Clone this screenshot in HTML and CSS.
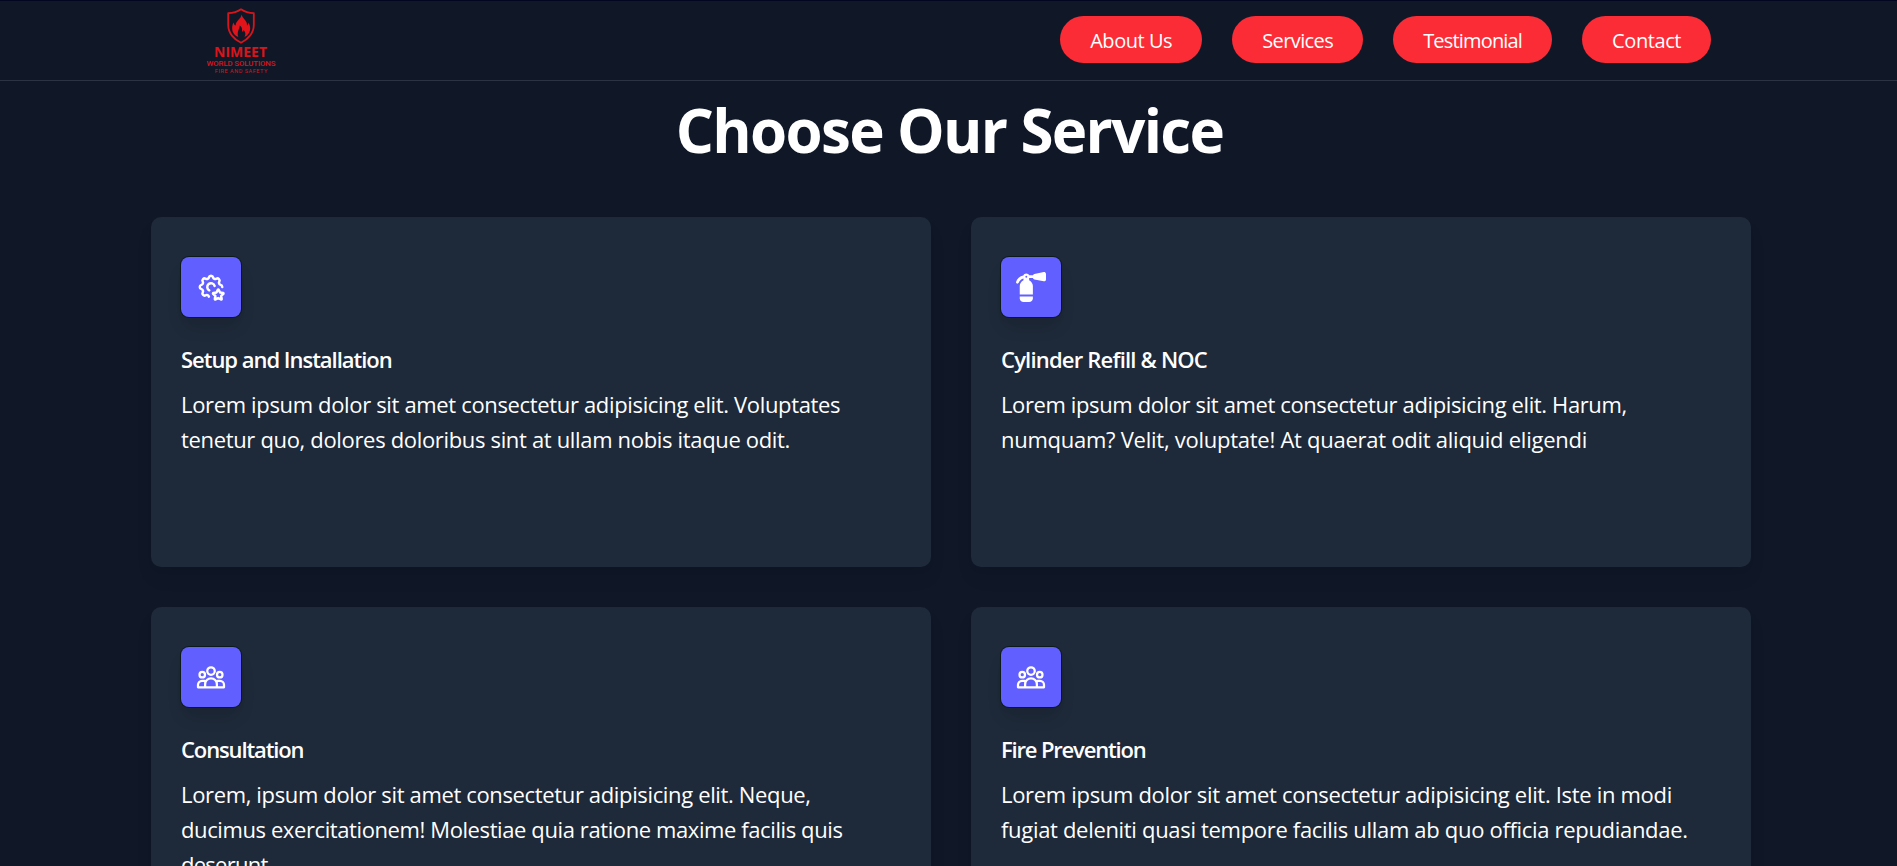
FILE: index.html
```html
<!DOCTYPE html>
<html lang="en">
<head>
<meta charset="utf-8">
<title>Nimeet World Solutions</title>
<link rel="stylesheet" href="styles.css">
</head>
<body>
<header class="header">
  <svg class="logo" viewBox="0 0 80 80" role="img" aria-label="Nimeet World Solutions">
    <g transform="translate(1 0)">
      <path class="logo-shield" d="M40 9.300C36 12 32 13 27.200 13.200V25C27.200 33 33 39.500 40 42.800C47 39.500 52.800 33 52.800 25V13.200C48 13 44 12 40 9.300Z"/>
      <path class="logo-flame" d="M40.500 14.500C41.500 18.500 46.500 20.500 46 25.500C47 25 47.300 23.800 47.300 22.500C50.500 27 50 34 43.500 37C45 34.500 44.500 31.500 42.500 30C42.300 31.500 41.500 31.800 41 31.500C41.500 28.500 40.500 26.500 38.700 25.500C39 29 35.500 31 37.300 37C31 34.500 29.800 28 32.500 22.500C33 24.500 33.800 25.300 34.700 25.500C34.500 20.500 40 19.500 40.500 14.500Z"/>
    </g>
    <text class="logo-name" x="14" y="57.200" textLength="53">NIMEET</text>
    <text class="logo-sub" x="6.500" y="65.800" textLength="69">WORLD SOLUTIONS</text>
    <text class="logo-tag" x="14.800" y="73" textLength="52.500">FIRE AND SAFETY</text>
  </svg>
  <nav class="nav">
    <a class="nav-link about">About Us</a>
    <a class="nav-link services">Services</a>
    <a class="nav-link testimonial">Testimonial</a>
    <a class="nav-link contact">Contact</a>
  </nav>
</header>
<main class="main">
  <h1 class="heading">Choose Our Service</h1>
  <section class="grid">
    <article class="card setup">
      <div class="icon-box">
        <svg class="icon line" viewBox="0 0 24 24"><path d="M10.325 19.683a1.723 1.723 0 0 0-2.573-1.066c-1.543.94-3.310-.826-2.370-2.370a1.724 1.724 0 0 0-1.065-2.572c-1.756-.426-1.756-2.924 0-3.350a1.724 1.724 0 0 0 1.066-2.573c-.94-1.543.826-3.310 2.370-2.370c1 .608 2.296.07 2.572-1.065c.426-1.756 2.924-1.756 3.350 0a1.724 1.724 0 0 0 2.573 1.066c1.543-.94 3.310.826 2.370 2.370a1.724 1.724 0 0 0 1.065 2.572c.860.209 1.298.914 1.314 1.635"/><path d="M14.882 11.165a3.001 3.001 0 1 0-4.310 3.474"/><path d="M17.800 20.817l-2.172 1.138a.392.392 0 0 1-.568-.41l.415-2.411l-1.757-1.707a.389.389 0 0 1 .217-.665l2.428-.352l1.086-2.193a.392.392 0 0 1 .702 0l1.086 2.193l2.428.352a.39.39 0 0 1 .217.665l-1.757 1.707l.414 2.410a.39.39 0 0 1-.567.411z"/></svg>
      </div>
      <h2 class="title">Setup and Installation</h2>
      <p class="text"><span class="row-a">Lorem ipsum dolor sit amet consectetur adipisicing elit. Voluptates</span> <span class="row-b">tenetur quo, dolores doloribus sint at ullam nobis itaque odit.</span></p>
    </article>
    <article class="card cylinder">
      <div class="icon-box">
        <svg class="icon solid" viewBox="0 0 512 512"><path fill-rule="evenodd" d="M500.300 7.300C507.700 13.300 512 22.400 512 32v96c0 9.600-4.300 18.700-11.700 24.700s-17.200 8.500-26.600 6.600l-160-32C301.500 124.900 292 115.700 289 104H224v34.800c37.800 18 64 56.500 64 101.200v144H64V240c0-44.700 26.200-83.200 64-101.200v-28.500C90 119 61 146 46 185.500c-5 12-19 17.500-31 12.500s-18-19-13-31C20 112 63 70 124 59c8-20 28-35 52-35 22 0 40 13 49 32h64c3-11.700 12.500-20.900 24.700-23.300l160-32c9.400-1.900 19.100.6 26.600 6.600zM176 96a16 16 0 1 0 0-32 16 16 0 0 0 0 32z"/><path d="M64 416h224v32c0 35.300-28.700 64-64 64h-96c-35.300 0-64-28.700-64-64z"/></svg>
      </div>
      <h2 class="title">Cylinder Refill &amp; NOC</h2>
      <p class="text"><span class="row-a">Lorem ipsum dolor sit amet consectetur adipisicing elit. Harum,</span> <span class="row-b">numquam? Velit, voluptate! At quaerat odit aliquid eligendi</span></p>
    </article>
    <article class="card consultation">
      <div class="icon-box">
        <svg class="icon line people" viewBox="0 0 24 24"><circle cx="12" cy="7.200" r="3"/><circle cx="5" cy="10.100" r="2.200"/><circle cx="19" cy="10.100" r="2.200"/><path d="M7.300 20.200v-2.500a4.700 4.700 0 0 1 9.400 0v2.500M6.800 15H4.800A3.200 3.200 0 0 0 1.600 18.200v2h20.800v-2A3.200 3.200 0 0 0 19.200 15h-2"/></svg>
      </div>
      <h2 class="title">Consultation</h2>
      <p class="text"><span class="row-a">Lorem, ipsum dolor sit amet consectetur adipisicing elit. Neque,</span> <span class="row-b">ducimus exercitationem! Molestiae quia ratione maxime facilis quis</span> <span class="row-c">deserunt.</span></p>
    </article>
    <article class="card prevention">
      <div class="icon-box">
        <svg class="icon line people" viewBox="0 0 24 24"><circle cx="12" cy="7.200" r="3"/><circle cx="5" cy="10.100" r="2.200"/><circle cx="19" cy="10.100" r="2.200"/><path d="M7.300 20.200v-2.500a4.700 4.700 0 0 1 9.400 0v2.500M6.800 15H4.800A3.200 3.200 0 0 0 1.600 18.200v2h20.800v-2A3.200 3.200 0 0 0 19.200 15h-2"/></svg>
      </div>
      <h2 class="title">Fire Prevention</h2>
      <p class="text"><span class="row-a">Lorem ipsum dolor sit amet consectetur adipisicing elit. Iste in modi</span> <span class="row-b">fugiat deleniti quasi tempore facilis ullam ab quo officia repudiandae.</span></p>
    </article>
  </section>
</main>
</body>
</html>
```
FILE: styles.css
```css
* { box-sizing: border-box; margin: 0; padding: 0; }
body {
  height: 866px;
  overflow: hidden;
  background: #101828;
  color: #fff;
  font-family: "Open Sans", "Noto Sans", sans-serif;
}
.header {
  display: flex;
  justify-content: space-between;
  align-items: flex-start;
  height: 81px;
  padding: 0 186px 0 200px;
  border-top: 1px solid #030620;
  border-bottom: 1px solid #2c3342;
}
.logo { width: 80px; height: 80px; margin-top: -1px; }
.logo-shield { fill: none; stroke: #d9151b; stroke-width: 1.800; stroke-linejoin: round; }
.logo-flame { fill: #e0141a; }
.logo text { fill: #d9151b; }
.logo .logo-name { font-family: "Open Sans", sans-serif; font-size: 14px; font-weight: 700; }
.logo .logo-sub { font-family: Roboto, sans-serif; font-size: 7.800px; font-weight: 500; }
.logo .logo-tag { font-family: Roboto, sans-serif; font-size: 5.500px; }
.nav { display: flex; gap: 30px; padding-top: 15px; }
.nav-link {
  height: 47px;
  padding: 0 30px;
  border-radius: 24px;
  background: #fb2c36;
  font-size: 20px;
  line-height: 50px;
}
.about { letter-spacing: -.450px; }
.services { letter-spacing: -.600px; }
.testimonial { letter-spacing: -.820px; }
.contact { letter-spacing: -.420px; }
.main { padding: 0 146px 0 151px; }
.heading {
  padding: 14px 3px 0 0;
  font-size: 60px;
  font-weight: 700;
  line-height: 70px;
  letter-spacing: -1.650px;
  text-align: center;
}
.grid {
  display: grid;
  grid-template-columns: 780px 780px;
  grid-auto-rows: 350px;
  gap: 40px;
  margin-top: 52px;
}
.card {
  padding: 40px 30px;
  border-radius: 10px;
  background: #1e2939;
  box-shadow: 0 12px 19px -4px rgba(0, 0, 0, .1), 0 5px 8px -5px rgba(0, 0, 0, .1);
}
.icon-box {
  display: flex;
  align-items: center;
  justify-content: center;
  width: 60px;
  height: 60px;
  border-radius: 8px;
  background: #615fff;
  box-shadow: 0 0 0 1px #0d1a1c, 0 12px 19px -4px rgba(0, 0, 0, .1), 0 5px 8px -5px rgba(0, 0, 0, .1);
}
.icon { width: 30px; height: 30px; }
.line { fill: none; stroke: #fff; stroke-width: 2; stroke-linecap: round; stroke-linejoin: round; }
.people { stroke-width: 1.800; }
.solid { fill: #fff; }
.title {
  margin-top: 25px;
  font-size: 22px;
  font-weight: 600;
  line-height: 35px;
}
.text {
  margin-top: 10px;
  font-size: 22px;
  line-height: 35px;
  white-space: nowrap;
}
.text span { display: block; }

/* Tracking per card */
.setup .title { letter-spacing: -1.020px; }
.setup .row-a { letter-spacing: -.344px; }
.setup .row-b { letter-spacing: -.335px; }
.cylinder .title { letter-spacing: -.800px; }
.cylinder .row-a { letter-spacing: -.380px; }
.cylinder .row-b { letter-spacing: -.260px; }
.consultation .title { letter-spacing: -1.120px; }
.consultation .row-a { letter-spacing: -.355px; }
.consultation .row-b { letter-spacing: -.400px; }
.consultation .row-c { letter-spacing: -.750px; }
.prevention .title { letter-spacing: -1.170px; }
.prevention .row-a { letter-spacing: -.315px; }
.prevention .row-b { letter-spacing: -.315px; }
```
